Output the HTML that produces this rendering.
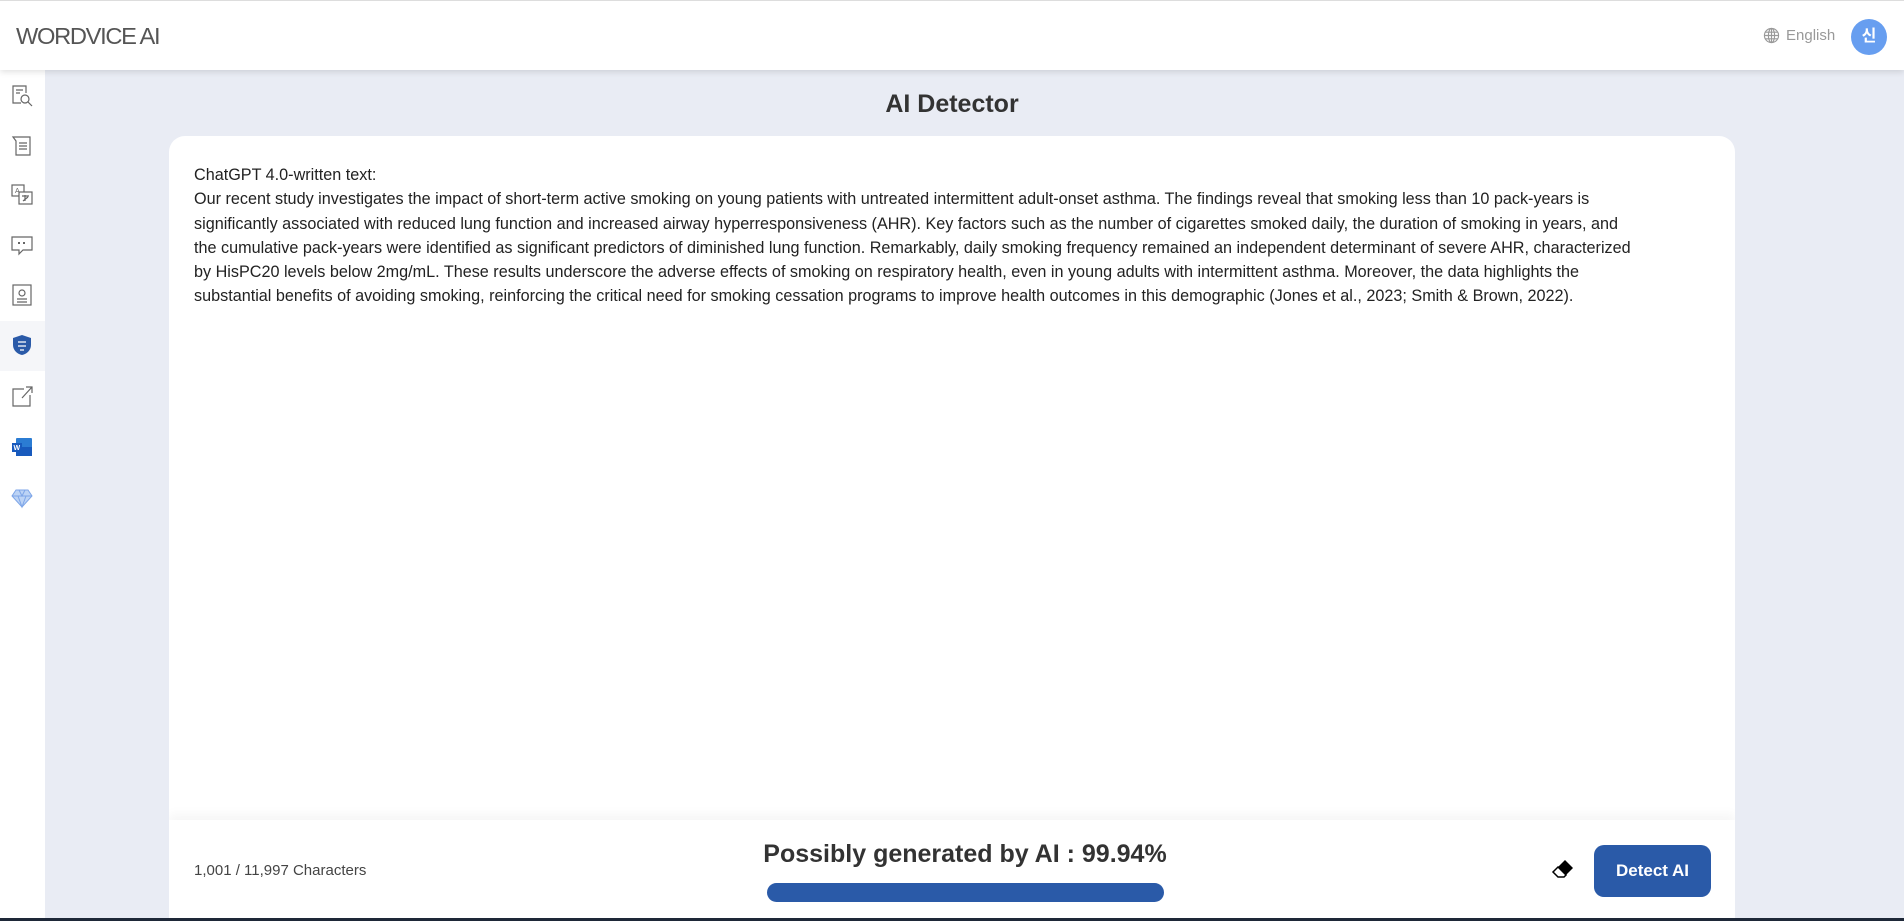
<!DOCTYPE html>
<html style="overflow:hidden;height:921px"><head><meta charset="utf-8"><style>
*{margin:0;padding:0;box-sizing:border-box}
body{width:1904px;height:921px;overflow:hidden;background:#e9ecf4;font-family:"Liberation Sans","Noto Sans CJK KR",sans-serif;position:relative}
.hdr{position:absolute;left:0;top:0;width:1904px;height:70px;background:#fff;border-top:1px solid #ddd;box-shadow:0 2px 6px rgba(0,0,0,.12);z-index:3}
.logo{position:absolute;left:16px;top:22px;font-size:23px;color:#555;letter-spacing:-1.3px;font-weight:400;transform:scaleX(1.03);transform-origin:left}
.lang{position:absolute;left:1763px;top:26px;font-size:15px;color:#999;display:flex;align-items:center;gap:6px}
.av{position:absolute;left:1851px;top:18px;width:36px;height:36px;border-radius:50%;background:#679ef0;color:#fff;font-size:16px;text-align:center;line-height:36px;font-weight:bold}
.side{position:absolute;left:0;top:70px;width:45px;height:851px;background:#fff;z-index:2}
.ic{position:absolute;left:10px;width:24px;height:24px}
.active{position:absolute;left:0;top:251px;width:45px;height:50px;background:#f5f6f9}
h1{position:absolute;left:0;width:1904px;text-align:center;top:90px;font-size:25px;color:#333;font-weight:bold}
.card{position:absolute;left:169px;top:136px;width:1566px;height:782px;background:#fff;border-radius:16px 16px 0 0;overflow:hidden}
.txt{position:absolute;left:25px;top:27px;font-size:16.2px;line-height:24.3px;color:#222;white-space:nowrap}
.foot{position:absolute;left:0;top:684px;width:1566px;height:120px;background:#fff;box-shadow:0 -6px 10px rgba(0,0,0,.04)}
.cnt{position:absolute;left:25px;top:42px;font-size:15px;color:#444}
.res{position:absolute;left:496px;width:600px;text-align:center;top:20px;font-size:25px;font-weight:bold;color:#333;white-space:nowrap}
.bar{position:absolute;left:598px;top:63px;width:397px;height:19px;border-radius:10px;background:#2a5aa8}
.btn{position:absolute;left:1425px;top:25px;width:117px;height:52px;border-radius:10px;background:#2a5aa8;color:#fff;font-weight:bold;font-size:17px;text-align:center;line-height:52px}
.er{position:absolute;left:1382px;top:38px}
.bl{position:absolute;left:0;top:918px;width:1904px;height:3px;background:#1e2838;z-index:5}
</style></head><body>
<div class="hdr">
<div class="logo">WORDVICE AI</div>
<div class="lang"><svg width="17" height="17" viewBox="0 0 18 18" fill="none" stroke="#999" stroke-width="1.2"><circle cx="9" cy="9" r="7.5"/><ellipse cx="9" cy="9" rx="3.3" ry="7.5"/><path d="M1.5 9h15M2.5 5.5h13M2.5 12.5h13M9 1.5v15"/></svg>English</div>
<div class="av">신</div>
</div>
<div class="side">
<div class="active"></div>
<svg class="ic" style="top:14px" viewBox="0 0 24 24" fill="none" stroke="#666" stroke-width="1.2"><path d="M16 9V2H3v17h8"/><path d="M6 6h7M6 9h4"/><circle cx="15" cy="15" r="4"/><path d="M18 18l4 4"/></svg>
<svg class="ic" style="top:64px" viewBox="0 0 24 24" fill="none" stroke="#666" stroke-width="1.2"><path d="M3 3h17v18H6V7L3 3z"/><path d="M9 9h8M9 12h8M9 15h8"/></svg>
<svg class="ic" style="top:113px" viewBox="0 0 24 24" fill="none" stroke="#666" stroke-width="1.2"><rect x="2" y="2" width="12" height="11"/><rect x="9" y="9" width="13" height="12" fill="#fff"/><text x="5" y="10" font-size="7" fill="#666" stroke="none">A</text><path d="M12 13h7M15 12v6M13 18l5-4"/></svg>
<svg class="ic" style="top:163px" viewBox="0 0 24 24" fill="none" stroke="#666" stroke-width="1.2"><path d="M2 4h20v13h-9l-4 4v-4H2z"/><path d="M9 9v2M14 9v2" stroke-width="2"/></svg>
<svg class="ic" style="top:213px" viewBox="0 0 24 24" fill="none" stroke="#666" stroke-width="1.2"><rect x="3" y="2" width="18" height="20"/><circle cx="12" cy="10" r="3"/><path d="M7 16h10M7 19h10"/></svg>
<svg class="ic" style="top:263px" viewBox="0 0 24 24"><path d="M12 2l9 3v7c0 5-4 9-9 10-5-1-9-5-9-10V5z" fill="#2a5aa8"/><path d="M8 9h8M8 13h8M10 17h4" stroke="#fff" stroke-width="1.2"/></svg>
<svg class="ic" style="top:314px" viewBox="0 0 24 24" fill="none" stroke="#666" stroke-width="1.2"><path d="M14 5H3v17h17V11"/><path d="M12 14L22 3M16 3h6v6"/></svg>
<svg class="ic" style="top:365px" viewBox="0 0 24 24"><rect x="6" y="3" width="16" height="18" rx="1" fill="#2b7cd3"/><rect x="6" y="12" width="16" height="9" fill="#185abd"/><rect x="2" y="8" width="10" height="9" fill="#185abd"/><text x="3.5" y="15" font-size="7" fill="#fff" font-weight="bold">W</text></svg>
<svg class="ic" style="top:416px" viewBox="0 0 24 24" fill="#bcd3f5" stroke="#7ea6e8" stroke-width="1"><path d="M6 4h12l4 6-10 11L2 10z"/><path d="M2 10h20M9 4l3 6 3-6M8 10l4 11 4-11" fill="none"/></svg>
</div>
<h1>AI Detector</h1>
<div class="card">
<div class="txt">ChatGPT 4.0-written text:<br>Our recent study investigates the impact of short-term active smoking on young patients with untreated intermittent adult-onset asthma. The findings reveal that smoking less than 10 pack-years is<br>significantly associated with reduced lung function and increased airway hyperresponsiveness (AHR). Key factors such as the number of cigarettes smoked daily, the duration of smoking in years, and<br>the cumulative pack-years were identified as significant predictors of diminished lung function. Remarkably, daily smoking frequency remained an independent determinant of severe AHR, characterized<br>by HisPC20 levels below 2mg/mL. These results underscore the adverse effects of smoking on respiratory health, even in young adults with intermittent asthma. Moreover, the data highlights the<br>substantial benefits of avoiding smoking, reinforcing the critical need for smoking cessation programs to improve health outcomes in this demographic (Jones et al., 2023; Smith &amp; Brown, 2022).</div>
<div class="foot">
<div class="cnt">1,001 / 11,997 Characters</div>
<div class="res">Possibly generated by AI : 99.94%</div>
<div class="bar"></div>
<svg class="er" width="24" height="22" viewBox="0 0 24 22"><path d="M14 2l8 8-9 9H7l-5-5z" fill="#000"/><path d="M7 19l-5-5 5-5 8 8-2 2z" fill="#fff" stroke="#000" stroke-width="1.5"/></svg>
<div class="btn">Detect AI</div>
</div>
</div>
<div class="bl"></div>
</body></html>
